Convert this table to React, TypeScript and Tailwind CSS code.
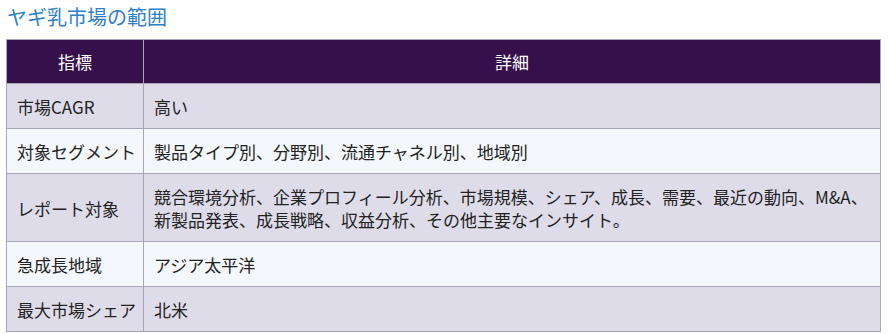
import React from "react";

const rows: { label: string; value: string[] }[] = [
  { label: "市場CAGR", value: ["高い"] },
  { label: "対象セグメント", value: ["製品タイプ別、分野別、流通チャネル別、地域別"] },
  {
    label: "レポート対象",
    value: [
      "競合環境分析、企業プロフィール分析、市場規模、シェア、成長、需要、最近の動向、M&A、",
      "新製品発表、成長戦略、収益分析、その他主要なインサイト。",
    ],
  },
  { label: "急成長地域", value: ["アジア太平洋"] },
  { label: "最大市場シェア", value: ["北米"] },
];

export default function App() {
  return (
    <div
      className="w-[889px] h-[334px] bg-white overflow-hidden pl-[6px]"
      style={{ fontFamily: '"Noto Sans CJK JP", "Noto Sans", sans-serif' }}
    >
      <h2 className="text-[20px] leading-[30px] pt-[2px] pl-[1px] h-[39px] text-[#2f7fc4] font-normal">
        ヤギ乳市場の範囲
      </h2>
      <table className="w-[875px] table-fixed border-collapse text-[17px] text-[#222]">
        <colgroup>
          <col className="w-[137px]" />
          <col />
        </colgroup>
        <thead>
          <tr className="bg-[#36104a] text-white h-[44px]">
            <th className="border border-[#a9a4bb] font-normal text-center">指標</th>
            <th className="border border-[#a9a4bb] font-normal text-center">詳細</th>
          </tr>
        </thead>
        <tbody>
          {rows.map((r, i) => (
            <tr key={r.label} className={i % 2 === 0 ? "bg-[#dfdcea]" : "bg-[#f4f8fc]"}>
              <td className="border border-[#a9a4bb] pl-[10px] pr-[4px] pt-[11px] pb-[10px] leading-[23px] whitespace-nowrap">
                {r.label}
              </td>
              <td className="border border-[#a9a4bb] px-[10px] pt-[11px] pb-[10px] leading-[23px]">
                {r.value.map((v) => (
                  <div key={v} className="whitespace-nowrap">{v}</div>
                ))}
              </td>
            </tr>
          ))}
        </tbody>
      </table>
    </div>
  );
}
